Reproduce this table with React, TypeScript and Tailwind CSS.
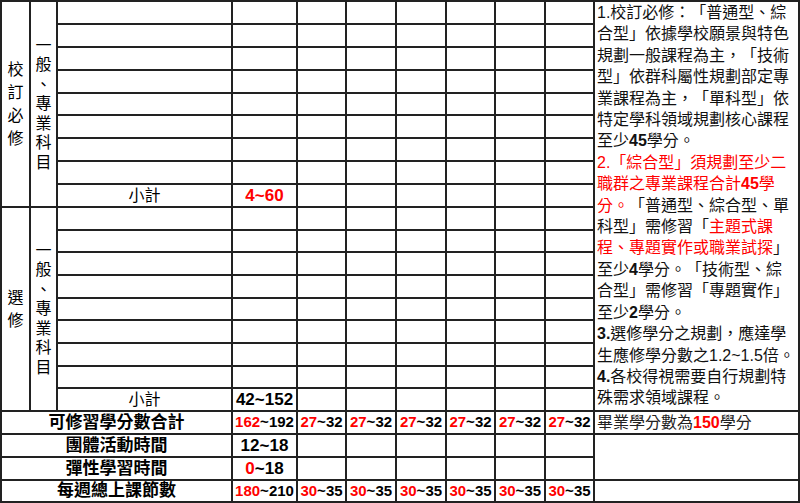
import React from 'react'

const cjk = "[font-family:'Liberation_Sans','Noto_Sans_CJK_TC',sans-serif] [text-spacing-trim:space-all]"

function Blank() {
  return <div className="bg-white" />
}

function BlankRow({ count }: { count: number }) {
  return (
    <>
      {Array.from({ length: count }).map((_, i) => (
        <Blank key={i} />
      ))}
    </>
  )
}

function Range({ lo, hi, red, allRed, size }: { lo: string; hi: string; red?: boolean; allRed?: boolean; size: string }) {
  return (
    <div className={`flex items-center justify-center bg-white font-bold ${allRed ? 'text-[#ff0000]' : 'text-black'} ${size}`}>
      <span className={red ? 'text-[#ff0000]' : ''}>{lo}</span>
      <span>~{hi}</span>
    </div>
  )
}

function Vertical({ text, leading, className }: { text: string; leading: string; className: string }) {
  return (
    <div className={`flex flex-col items-center justify-center bg-white text-[16px] ${leading} ${className}`}>
      {text.split('').map((ch, i) => (
        <span key={i}>{ch}</span>
      ))}
    </div>
  )
}

function SectionRows({ subtotal }: { subtotal: React.ReactNode }) {
  const rows = []
  for (let r = 0; r < 8; r++) {
    rows.push(
      <React.Fragment key={r}>
        <Blank />
        <Blank />
        <BlankRow count={6} />
      </React.Fragment>
    )
  }
  return (
    <>
      {rows}
      <div className="flex items-center justify-center bg-white text-[16px]">小計</div>
      {subtotal}
      <BlankRow count={6} />
    </>
  )
}

const R = ({ children }: { children: React.ReactNode }) => <span className="text-[#ff0000]">{children}</span>
const B = ({ children }: { children: React.ReactNode }) => <span className="font-bold">{children}</span>

export default function App() {
  return (
    <div className={`h-[503px] w-[800px] overflow-hidden bg-white text-black ${cjk}`}>
      <div className="grid h-[503px] w-[800px] grid-cols-[27px_25px_173px_63px_47px_48px_48px_47px_48px_47px_203px] grid-rows-[21px_21px_21px_21px_20px_21px_21px_21px_21px_21px_20px_21px_21px_20px_21px_21px_20px_21px_21px_21px_21px_20px] gap-[2px] border-2 border-[#222] bg-[#222]">
        {/* 校訂必修 */}
        <Vertical text="校訂必修" leading="leading-[23px]" className="col-start-1 row-span-9 row-start-1" />
        <Vertical text="一般、專業科目" leading="leading-[19.5px]" className="col-start-2 row-span-9 row-start-1" />
        <div className="col-start-3 col-end-11 row-span-9 row-start-1 grid grid-cols-subgrid grid-rows-subgrid">
          <SectionRows subtotal={<Range lo="4" hi="60" allRed size="text-[17px]" />} />
        </div>

        {/* 說明 */}
        <div className="col-start-11 row-span-18 row-start-1 overflow-hidden bg-white pl-[2px] text-[16px] leading-[21.4px] whitespace-nowrap text-[#111]">
          <div>1.校訂必修：「普通型、綜</div>
          <div>合型」依據學校願景與特色</div>
          <div>規劃一般課程為主，「技術</div>
          <div>型」依群科屬性規劃部定專</div>
          <div>業課程為主，「單科型」依</div>
          <div>特定學科領域規劃核心課程</div>
          <div>至少<B>45</B>學分。</div>
          <div className="text-[#ff0000]">2.「綜合型」須規劃至少二</div>
          <div className="text-[#ff0000]">職群之專業課程合計<B>45</B>學</div>
          <div><R>分。</R>「普通型、綜合型、單</div>
          <div>科型」需修習「<R>主題式課</R></div>
          <div><R>程、專題實作或職業試探</R>」</div>
          <div>至少<B>4</B>學分。「技術型、綜</div>
          <div>合型」需修習「專題實作」</div>
          <div>至少<B>2</B>學分。</div>
          <div><B>3.</B>選修學分之規劃，應達學</div>
          <div>生應修學分數之1.2~1.5倍。</div>
          <div><B>4.</B>各校得視需要自行規劃特</div>
          <div>殊需求領域課程。</div>
        </div>

        {/* 選修 */}
        <Vertical text="選修" leading="leading-[23px]" className="col-start-1 row-span-9 row-start-10" />
        <Vertical text="一般、專業科目" leading="leading-[19.5px]" className="col-start-2 row-span-9 row-start-10" />
        <div className="col-start-3 col-end-11 row-span-9 row-start-10 grid grid-cols-subgrid grid-rows-subgrid">
          <SectionRows subtotal={<Range lo="42" hi="152" size="text-[17px]" />} />
        </div>

        {/* 合計 */}
        <div className="col-span-3 col-start-1 flex items-center justify-center bg-white text-[17px] font-bold">可修習學分數合計</div>
        <Range lo="162" hi="192" red size="text-[15px]" />
        {[0, 1, 2, 3, 4, 5].map((i) => (
          <Range key={i} lo="27" hi="32" red size="text-[15px]" />
        ))}
        <div className="flex items-center bg-white pl-[2px] text-[16px] text-[#222]">
          畢業學分數為<span className="font-bold text-[#ff0000]">150</span>學分
        </div>

        <div className="col-span-3 col-start-1 flex items-center justify-center bg-white text-[17px] font-bold">團體活動時間</div>
        <Range lo="12" hi="18" size="text-[17px]" />
        <BlankRow count={6} />
        <div className="row-span-2 bg-white" />

        <div className="col-span-3 col-start-1 flex items-center justify-center bg-white text-[17px] font-bold">彈性學習時間</div>
        <Range lo="0" hi="18" red size="text-[17px]" />
        <BlankRow count={6} />

        <div className="col-span-3 col-start-1 flex items-center justify-center bg-white text-[17px] font-bold">每週總上課節數</div>
        <Range lo="180" hi="210" red size="text-[15px]" />
        {[0, 1, 2, 3, 4, 5].map((i) => (
          <Range key={i} lo="30" hi="35" red size="text-[15px]" />
        ))}
        <Blank />
      </div>
    </div>
  )
}
